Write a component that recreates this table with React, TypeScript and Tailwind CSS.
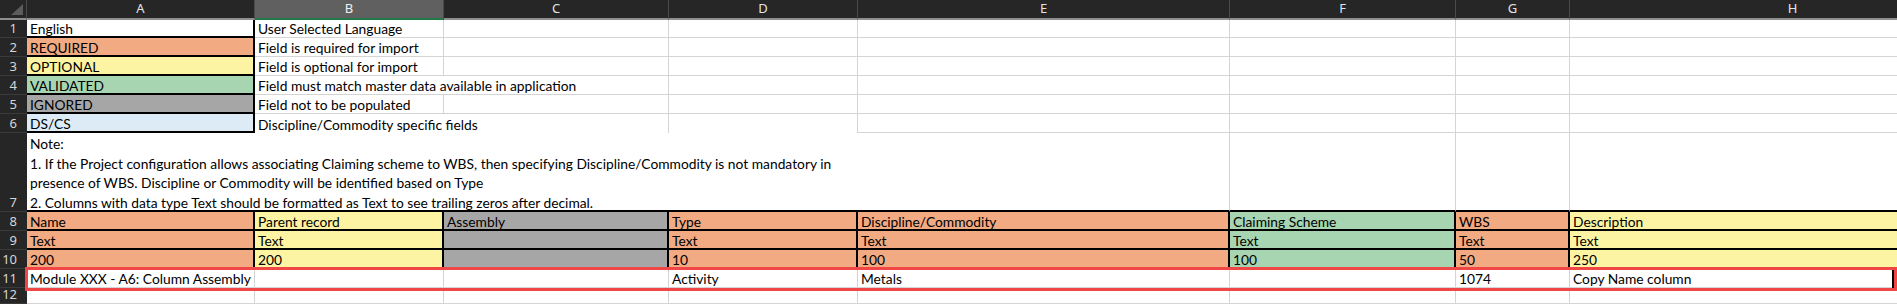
import React from 'react'

const OR = 'bg-[#f1aa82]'
const YE = 'bg-[#fcf4a3]'
const GR = 'bg-[#a8d5b1]'
const GY = 'bg-[#a6a6a6]'
const BL = 'bg-[#ddebf7]'

// gridline cell, black bordered cell
const G = 'border-r border-b border-[#d4d4d4] leading-[16px]'
const K = 'border-r-2 border-b-2 border-black leading-[14px]'

const cols = ['A', 'B', 'C', 'D', 'E', 'F', 'G', 'H']

const header8 = [
  ['Name', OR],
  ['Parent record', YE],
  ['Assembly', GY],
  ['Type', OR],
  ['Discipline/Commodity', OR],
  ['Claiming Scheme', GR],
  ['WBS', OR],
  ['Description', YE],
]
const row9 = ['Text', 'Text', '', 'Text', 'Text', 'Text', 'Text', 'Text']
const row10 = ['200', '200', '', '10', '100', '100', '50', '250']
const row11 = ['Module XXX - A6: Column Assembly', '', '', 'Activity', 'Metals', '', '1074', 'Copy Name column']

function Cell({ className = '', children }: { className?: string; children?: React.ReactNode }) {
  return (
    <div className={`flex items-end whitespace-nowrap pl-[3px] text-[13.8px] text-black ${className}`}>
      {children}
    </div>
  )
}

function RowNum({ n }: { n: number }) {
  return (
    <div className="flex items-end justify-end border-b border-[#3a3a3a] bg-[#262626] pr-[10px] text-[13px] leading-[17px] text-[#d6d6d6] [font-family:'Noto_Sans',sans-serif]">
      {n}
    </div>
  )
}

export default function App() {
  return (
    <div className="relative h-[304px] w-[1897px] overflow-hidden bg-white [font-family:Lato,sans-serif]">
      <div className="grid grid-cols-[27px_228px_189px_225px_189px_372px_226px_114px_446px] grid-rows-[20px_18px_19px_19px_19px_19px_19px_79px_19px_19px_19px_19px_16px]">
        {/* column headers */}
        <div className="flex items-end justify-end border-b-2 border-r border-[#8f8f8f] border-r-[#4a4a4a] bg-[#262626] p-[3px]">
          <svg width="12" height="11" viewBox="0 0 12 11">
            <polygon points="12,0 12,11 0,11" fill="#5c5c5c" />
          </svg>
        </div>
        {cols.map((c) =>
          c === 'B' ? (
            <div
              key={c}
              className="flex items-center justify-center border-r border-b-2 border-r-[#4a4a4a] border-b-[#1f7a45] bg-[#606060] text-[13px] text-[#f0f0f0] [font-family:'Noto_Sans',sans-serif]"
            >
              {c}
            </div>
          ) : (
            <div
              key={c}
              className="flex items-center justify-center border-r border-b-2 border-r-[#4a4a4a] border-b-[#8f8f8f] bg-[#262626] text-[13px] text-[#e4e4e4] [font-family:'Noto_Sans',sans-serif]"
            >
              {c}
            </div>
          )
        )}

        {/* row 1 */}
        <RowNum n={1} />
        <Cell className={K}>English</Cell>
        <Cell className={G}>User Selected Language</Cell>
        <Cell className={G} />
        <Cell className={G} />
        <Cell className={G} />
        <Cell className={G} />
        <Cell className={G} />
        <Cell className={G} />

        {/* row 2 */}
        <RowNum n={2} />
        <Cell className={`${K} ${OR}`}>REQUIRED</Cell>
        <Cell className={G}>Field is required for import</Cell>
        <Cell className={G} />
        <Cell className={G} />
        <Cell className={G} />
        <Cell className={G} />
        <Cell className={G} />
        <Cell className={G} />

        {/* row 3 */}
        <RowNum n={3} />
        <Cell className={`${K} ${YE}`}>OPTIONAL</Cell>
        <Cell className={G}>Field is optional for import</Cell>
        <Cell className={G} />
        <Cell className={G} />
        <Cell className={G} />
        <Cell className={G} />
        <Cell className={G} />
        <Cell className={G} />

        {/* row 4 */}
        <RowNum n={4} />
        <Cell className={`${K} ${GR}`}>VALIDATED</Cell>
        <Cell className="border-b border-[#d4d4d4] leading-[16px]">Field must match master data available in application</Cell>
        <Cell className={G} />
        <Cell className={G} />
        <Cell className={G} />
        <Cell className={G} />
        <Cell className={G} />
        <Cell className={G} />

        {/* row 5 */}
        <RowNum n={5} />
        <Cell className={`${K} ${GY}`}>IGNORED</Cell>
        <Cell className={G}>Field not to be populated</Cell>
        <Cell className={G} />
        <Cell className={G} />
        <Cell className={G} />
        <Cell className={G} />
        <Cell className={G} />
        <Cell className={G} />

        {/* row 6 */}
        <RowNum n={6} />
        <Cell className={`${K} ${BL}`}>DS/CS</Cell>
        <Cell className="leading-[16px]">Discipline/Commodity specific fields</Cell>
        <Cell className="border-r border-[#d4d4d4]" />
        <Cell className="border-r border-[#d4d4d4]" />
        <Cell className={G} />
        <Cell className={G} />
        <Cell className={G} />
        <Cell className={G} />

        {/* row 7: merged A7:D7 */}
        <RowNum n={7} />
        <div className="col-span-4 flex flex-col justify-end border-b-2 border-black pl-[3px] text-[13.8px] text-black">
          <div className="-mb-[2px] whitespace-nowrap leading-[19.4px]">
            <div>Note:</div>
            <div>
              1. If the Project configuration allows associating Claiming scheme to WBS, then specifying
              Discipline/Commodity is not mandatory in
            </div>
            <div>presence of WBS. Discipline or Commodity will be identified based on Type</div>
            <div>2. Columns with data type Text should be formatted as Text to see trailing zeros after decimal.</div>
          </div>
        </div>
        <div className="border-r border-b-2 border-r-[#d4d4d4] border-b-black" />
        <div className="border-r border-b-2 border-r-[#d4d4d4] border-b-black" />
        <div className="border-r border-b-2 border-r-[#d4d4d4] border-b-black" />
        <div className="border-r border-b-2 border-r-[#d4d4d4] border-b-black" />

        {/* row 8 */}
        <RowNum n={8} />
        {header8.map(([label, bg]) => (
          <Cell key={label} className={`${K} ${bg}`}>
            {label}
          </Cell>
        ))}

        {/* row 9 */}
        <RowNum n={9} />
        {row9.map((v, i) => (
          <Cell key={i} className={`${K} ${header8[i][1]}`}>
            {v}
          </Cell>
        ))}

        {/* row 10 */}
        <RowNum n={10} />
        {row10.map((v, i) => (
          <Cell key={i} className={`${K} ${header8[i][1]}`}>
            {v}
          </Cell>
        ))}

        {/* row 11 */}
        <RowNum n={11} />
        {row11.map((v, i) => (
          <Cell key={i} className={G}>
            {v}
          </Cell>
        ))}

        {/* row 12 */}
        <RowNum n={12} />
        {cols.map((c) => (
          <Cell key={c} className={G} />
        ))}
      </div>

      {/* red annotation box around row 11 */}
      <div className="absolute left-[25px] top-[267px] flex h-[24px] w-[1872px] justify-end border-[3px] border-[#f04646]">
        <div className="h-full w-[2px] bg-black" />
      </div>
    </div>
  )
}
